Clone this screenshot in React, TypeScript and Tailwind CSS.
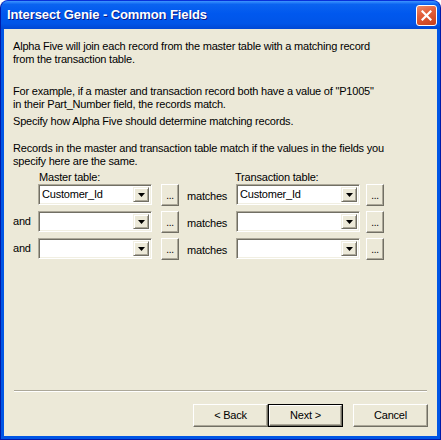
import { memo } from 'react';

const FONT = "font-['Liberation_Sans',Arial,sans-serif] tracking-[-0.2px]";

const DropArrow = () => (
  <div className="flex h-full w-[16px] items-center justify-center bg-[#ece9d8] border border-t-[#f1efe2] border-l-[#f1efe2] border-r-[#716f64] border-b-[#716f64] shadow-[inset_1px_1px_0_#ffffff,inset_-1px_-1px_0_#aca899]">
    <svg width="7" height="4" viewBox="0 0 7 4">
      <path d="M0 0h7L3.5 4z" fill="#000" />
    </svg>
  </div>
);

const Combo = ({ value, className }: { value?: string; className: string }) => (
  <div
    className={`flex h-[21px] items-stretch bg-white p-[2px] border border-t-[#aca899] border-l-[#aca899] border-r-white border-b-white shadow-[inset_1px_1px_0_#716f64,inset_-1px_-1px_0_#f1efe2] ${className}`}
  >
    <div className="flex flex-1 items-center pl-[1px] text-[11px] leading-none text-black">{value}</div>
    <DropArrow />
  </div>
);

const DotsButton = () => (
  <div className="flex h-[22px] w-[18px] items-end justify-center pb-[4px] bg-[#ece9d8] border border-t-white border-l-white border-r-[#716f64] border-b-[#716f64] shadow-[inset_-1px_-1px_0_#aca899] text-[10px] leading-none text-black">
    ...
  </div>
);

const FieldRow = ({ lead, master, trans }: { lead?: string; master?: string; trans?: string }) => (
  <div className="flex h-[23px] items-center">
    <div className="w-[25px] text-[11px] leading-none">{lead}</div>
    <Combo value={master} className="w-[114px]" />
    <div className="ml-[9px]">
      <DotsButton />
    </div>
    <div className="ml-[8px] w-[49px] pt-[3px] text-[11px] leading-none">matches</div>
    <Combo value={trans} className="w-[124px]" />
    <div className="ml-[6px]">
      <DotsButton />
    </div>
  </div>
);

const WizButton = ({ label, isDefault }: { label: string; isDefault?: boolean }) => {
  if (isDefault) {
    return (
      <div className="h-[23px] w-[75px] border border-black">
        <div className="flex h-full w-full items-center justify-center bg-[#ece9d8] border border-t-white border-l-white border-r-[#716f64] border-b-[#716f64] shadow-[inset_-1px_-1px_0_#aca899] text-[11px] leading-none">
          {label}
        </div>
      </div>
    );
  }

  return (
    <div className="flex h-[23px] w-[75px] items-center justify-center bg-[#ece9d8] border border-t-white border-l-white border-r-[#716f64] border-b-[#716f64] shadow-[inset_-1px_-1px_0_#aca899] text-[11px] leading-none">
      {label}
    </div>
  );
};

const App = memo(() => {
  return (
    <div className="h-[440px] w-[441px] bg-white">
      <div className="flex h-full w-full flex-col overflow-hidden rounded-t-[8px] bg-[#0055e5] border border-[#0019a8] border-t-[#0831d9]">
        {/* title bar */}
        <div className="flex h-[28px] shrink-0 items-center justify-between bg-[linear-gradient(180deg,#3d95ff_0%,#0a63f0_12%,#0058ee_45%,#0055e8_80%,#0048d4_100%)] pl-[6px] pr-[3px]">
          <span className="font-['Liberation_Sans',Arial,sans-serif] text-[13px] font-bold tracking-[-0.1px] text-white [text-shadow:1px_1px_0_#0a1883]">
            Intersect Genie - Common Fields
          </span>
          <div className="flex h-[21px] w-[21px] items-center justify-center rounded-[3px] border border-white bg-[linear-gradient(160deg,#ed8a68_0%,#e35f3a_40%,#c8401c_100%)]">
            <svg width="11" height="11" viewBox="0 0 11 11">
              <path d="M1.5 1.5l8 8M9.5 1.5l-8 8" stroke="#fff" strokeWidth="2.2" strokeLinecap="square" />
            </svg>
          </div>
        </div>

        {/* body */}
        <div className={`mx-[3px] mb-[3px] flex flex-1 flex-col bg-[#ece9d8] text-black ${FONT}`}>
          <div className="flex flex-col pl-[9px] pt-[11px] text-[11px] leading-[13px]">
            <p>
              Alpha Five will join each record from the master table with a matching record
              <br />
              from the transaction table.
            </p>
            <p className="mt-[19px]">
              For example, if a master and transaction record both have a value of &quot;P1005&quot;
              <br />
              in their Part_Number field, the records match.
            </p>
            <p className="mt-[4px]">Specify how Alpha Five should determine matching records.</p>
            <p className="mt-[14px]">
              Records in the master and transaction table match if the values in the fields you
              <br />
              specify here are the same.
            </p>

            <div className="mt-[3px] flex h-[12px] items-center leading-none">
              <span className="ml-[26px] w-[196px]">Master table:</span>
              <span>Transaction table:</span>
            </div>

            <div className="flex flex-col gap-[4px]">
              <FieldRow master="Customer_Id" trans="Customer_Id" />
              <FieldRow lead="and" />
              <FieldRow lead="and" />
            </div>
          </div>

          <div className="mx-[10px] mt-auto h-[2px] border-t border-t-[#aca899] border-b border-b-white" />

          <div className="mt-[12px] mb-[9px] flex justify-end pr-[9px]">
            <WizButton label="< Back" />
            <WizButton label="Next >" isDefault />
            <div className="ml-[10px]">
              <WizButton label="Cancel" />
            </div>
          </div>
        </div>
      </div>
    </div>
  );
});

App.displayName = 'App';

export default App;
